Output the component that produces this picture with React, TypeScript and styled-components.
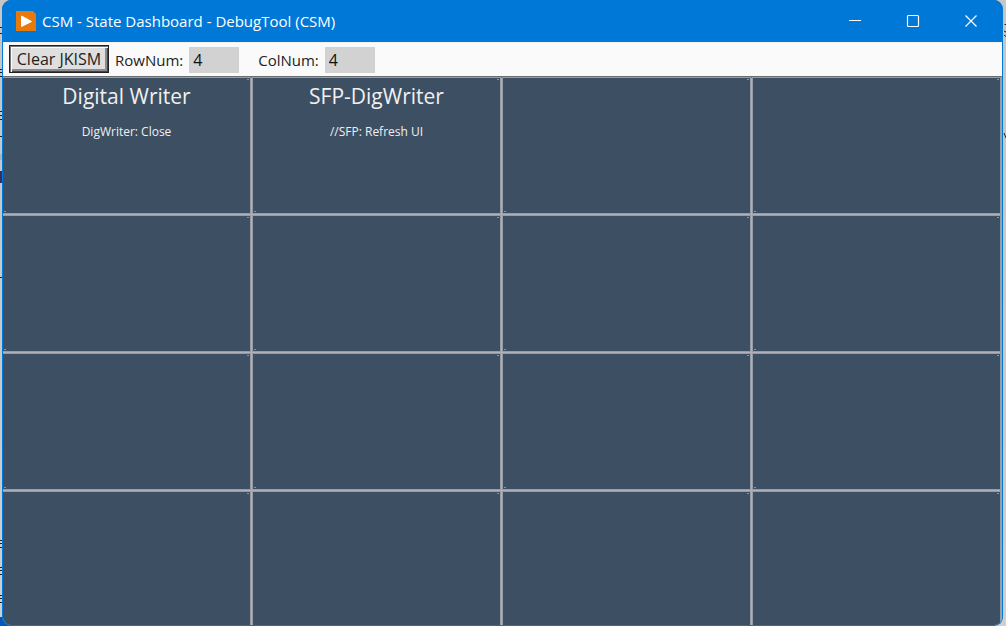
import React, { useState } from "react";
import styled, { createGlobalStyle } from "styled-components";

const GlobalStyle = createGlobalStyle`
  *, *::before, *::after { box-sizing: border-box; }
  body {
    margin: 0;
    background: #c9cacb;
    font-family: "Open Sans", "Noto Sans", sans-serif;
  }
`;

const Desktop = styled.div`
  display: flex;
  height: 100vh;
  min-height: 400px;
  background:
    linear-gradient(#0a55b8, #0a55b8) left bottom / 10px 9px no-repeat,
    linear-gradient(#c4c6c8, #c9c9c9 60%, #cfcfcf);
`;

const Backdrop = styled.svg<{ $width: number }>`
  flex: none;
  width: ${(p) => p.$width}px;
  height: 100%;
`;

const Window = styled.main`
  flex: 1;
  display: flex;
  flex-direction: column;
  min-width: 0;
  overflow: hidden;
  border: 1px solid #0078d7;
  border-top: 0;
  border-radius: 9px;
  background: #3d4f63;
`;

const TitleBar = styled.header`
  display: flex;
  align-items: center;
  flex: none;
  height: 42px;
  padding: 0 2px 0 13px;
  background: #0078d7;
  color: #fff;
`;

const AppIcon = styled.svg`
  width: 20px;
  height: 20px;
  margin-right: 6px;
`;

const Title = styled.h1`
  flex: 1;
  margin: 0;
  font-size: 15px;
  font-weight: 400;
  line-height: 20px;
  white-space: nowrap;
`;

const CaptionButton = styled.button`
  display: grid;
  place-items: center;
  width: 58px;
  height: 42px;
  padding: 0;
  border: 0;
  background: transparent;
  color: #fff;
`;

const Toolbar = styled.div`
  display: flex;
  align-items: center;
  flex: none;
  height: 34px;
  padding: 0 6px;
  background: #fafafa;
  border-top: 1px solid #f0f0f0;
  color: #222;
`;

const ClearButton = styled.button`
  height: 28px;
  width: 100px;
  margin: 0 6px 2px 0;
  padding: 0;
  border: 1px solid #222;
  box-shadow: inset 1px 1px #777, inset 2px 2px #fff, inset -1px -1px #444, inset -3px -3px #8c8c8c;
  background: #dfdfdf;
  color: #222;
  font: 16px/24px "Open Sans", sans-serif;
  white-space: nowrap;
`;

const Field = styled.label`
  display: flex;
  align-items: center;
  gap: 6px;
  margin-right: 19px;
  font-size: 15px;
  line-height: 28px;
  white-space: nowrap;
`;

const NumberInput = styled.input`
  width: 50px;
  height: 26px;
  padding: 0 4px;
  border: 0;
  border-radius: 0;
  background: #d2d2d2;
  color: #111;
  font: 16px/26px "Open Sans", sans-serif;
`;

const Board = styled.section`
  flex: 1;
  display: grid;
  grid-template-columns: repeat(4, minmax(0, 1fr));
  grid-template-rows: repeat(4, minmax(135px, 1fr));
  gap: 3px;
  min-height: 0;
  border-top: 2px solid #6b6d70;
  border-right: 2px solid #a0a3aa;
  background: #b0b1b8;
`;

const Cell = styled.article`
  position: relative;
  padding-top: 3px;
  background: #3d4f63;
  box-shadow: 0 0 0 1px #979ba4;
  color: #f0f0f0;
  text-align: center;

  &::before, &::after {
    content: "";
    position: absolute;
    width: 2px;
    height: 1px;
    background: #8b95a1;
  }
  &::before { top: 1px; right: 1px; }
  &::after { bottom: 1px; left: 1px; }
`;

const ModuleName = styled.h2`
  margin: 0;
  font-size: 21px;
  font-weight: 400;
  line-height: 30px;
`;

const ModuleState = styled.p`
  margin: 12px 0 0;
  font-size: 12px;
  line-height: 18px;
`;

const modules = [
  { name: "Digital Writer", state: "DigWriter: Close" },
  { name: "SFP-DigWriter", state: "//SFP: Refresh UI" },
];

const leftMarks = [27, 33, 69, 72, 76, 111, 115, 119, 136, 277, 540, 543, 547, 567, 570, 574, 595, 598, 602];

export default function App() {
  const [rows, setRows] = useState("4");
  const [cols, setCols] = useState("4");
  return (
    <Desktop>
      <GlobalStyle />
      <Backdrop $width={2} aria-hidden="true">
        {leftMarks.map((y) => (
          <rect key={y} y={y} width="2" height="1" fill="#222" />
        ))}
        <rect y="154" width="2" height="6" fill="#a5b8c0" />
        <rect y="171" width="2" height="12" fill="#3a2a66" />
      </Backdrop>
      <Window>
        <TitleBar>
          <AppIcon viewBox="0 0 20 20" aria-hidden="true">
            <path d="M0 0H17L20 3V20H0Z" fill="#e8790c" />
            <path d="M5.500 5L15.500 10.500L5.500 15.500Z" fill="#fff" stroke="#fff" strokeLinejoin="round" />
          </AppIcon>
          <Title>CSM - State Dashboard - DebugTool (CSM)</Title>
          <CaptionButton aria-label="Minimize">
            <svg width="14" height="14"><path d="M1 6.500H13" stroke="currentColor" /></svg>
          </CaptionButton>
          <CaptionButton aria-label="Maximize">
            <svg width="14" height="14"><rect x="1.500" y="1.500" width="11" height="11" rx="1" fill="none" stroke="currentColor" strokeWidth="1.200" /></svg>
          </CaptionButton>
          <CaptionButton aria-label="Close">
            <svg width="14" height="14"><path d="M1.500 1.500L12.500 12.500M12.500 1.500L1.500 12.500" stroke="currentColor" strokeWidth="1.200" /></svg>
          </CaptionButton>
        </TitleBar>
        <Toolbar>
          <ClearButton>Clear JKISM</ClearButton>
          <Field>RowNum: <NumberInput value={rows} onChange={(e) => setRows(e.target.value)} /></Field>
          <Field>ColNum: <NumberInput value={cols} onChange={(e) => setCols(e.target.value)} /></Field>
        </Toolbar>
        <Board>
          {Array.from({ length: 16 }, (_, i) => (
            <Cell key={i}>
              {modules[i] && (
                <>
                  <ModuleName>{modules[i].name}</ModuleName>
                  <ModuleState>{modules[i].state}</ModuleState>
                </>
              )}
            </Cell>
          ))}
        </Board>
      </Window>
      <Backdrop $width={3} aria-hidden="true">
        <path d="M3 24.500H1.500M1 31L3 32M1 35L3 36.500M1 133L3 138" stroke="#222" fill="none" />
      </Backdrop>
    </Desktop>
  );
}
